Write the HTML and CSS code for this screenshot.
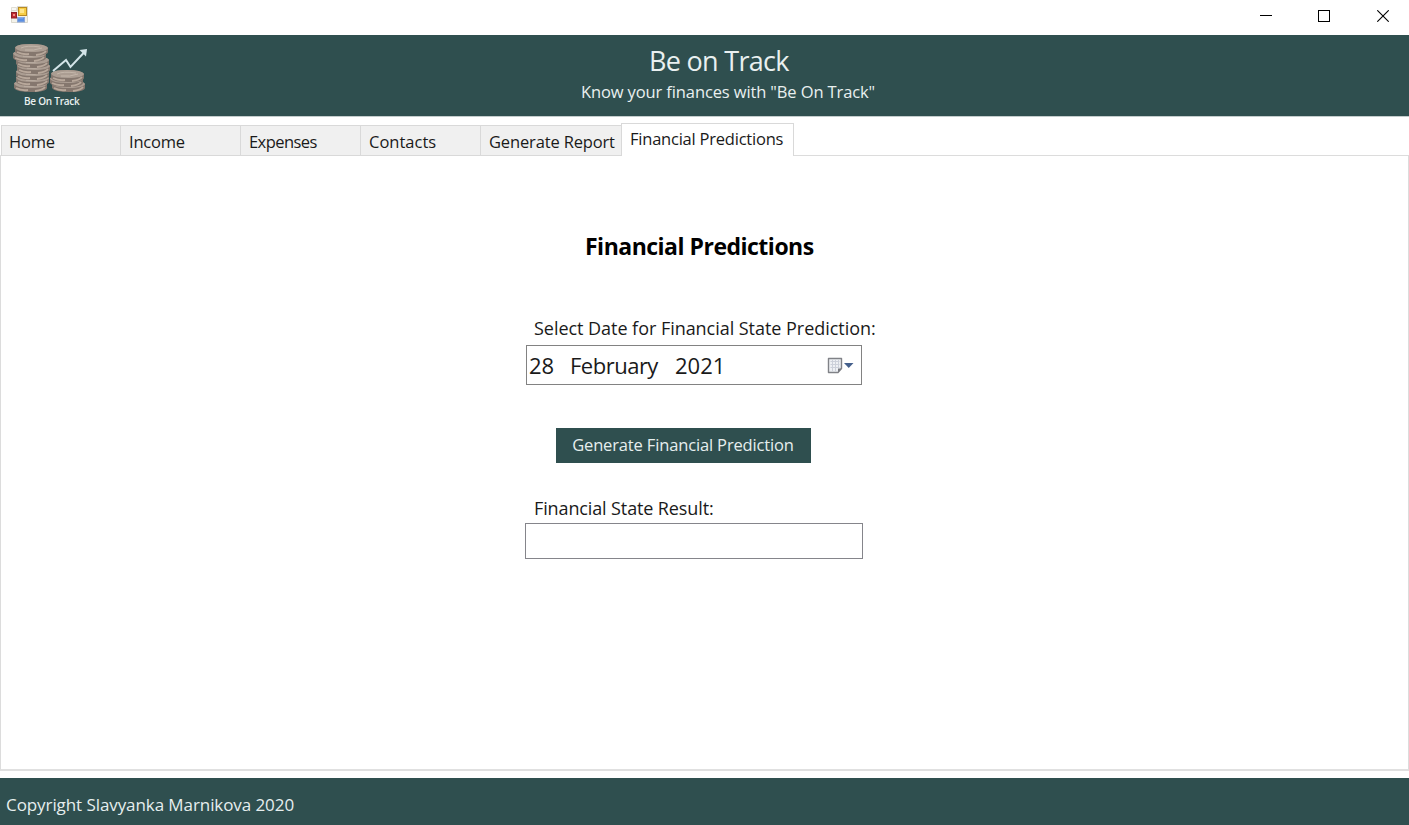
FILE: index.html
```html
<!DOCTYPE html>
<html lang="en">
<head>
<meta charset="utf-8">
<title>Be on Track</title>
<link rel="stylesheet" href="styles.css">
</head>
<body>
<div class="window">
  <div class="titlebar">
    <svg class="app-icon" width="19" height="19" viewBox="0 0 19 19">
      <path d="M7.5 .5h10v16h-16v-12h6z" fill="#f3f2ea" stroke="#d2cfc3" stroke-width=".8"/>
      <path d="M1.500 1.500h5v3h-5z" fill="#f8f8f4" stroke="#d8d6cc" stroke-width=".8"/>
      <rect x="8.500" y="1.500" width="8" height="8" fill="#f7ce45" stroke="#b98a22"/>
      <rect x="10" y="3" width="4" height="4" fill="#ffe68a"/>
      <rect x="1.500" y="6.500" width="5" height="5.500" fill="#bf2a2e" stroke="#8d2027"/>
      <rect x="3" y="8" width="2" height="2" fill="#ef8b84"/>
      <rect x="7.500" y="11.500" width="7" height="4.500" fill="#5a8fe2" stroke="#8ba6d8"/>
      <path d="M8 12h5" stroke="#86b0f2"/>
    </svg>
    <div class="controls">
      <svg width="12" height="12" viewBox="0 0 12 12"><path d="M0 5.5h12" stroke="#000"/></svg>
      <svg width="12" height="12" viewBox="0 0 12 12"><rect x=".5" y=".5" width="11" height="11" fill="none" stroke="#000"/></svg>
      <svg width="12" height="12" viewBox="0 0 12 12"><path d="M.3 .3l11.4 11.4M11.7 .3L.3 11.7" stroke="#000" stroke-width="1.1"/></svg>
    </div>
  </div>

  <header class="header">
    <div class="logo">
      <svg width="80" height="52" viewBox="0 0 80 52">
        <defs>
          <g id="coin">
            <path d="M0 4Q1 0 16 0T33 4V8Q32 12 17 12T0 8z" fill="#85776e"/>
            <path d="M0 3.800Q1 0 16 0T33 3.800Q32 8 17 8T0 3.800z" fill="#ab9d92"/>
            <path d="M6 4Q12 1 25 3M10 6Q19 7 27 4" fill="none" stroke="#c4b7ab" stroke-width="1"/>
            <path d="M2 8Q8 11 14 10M21 11Q29 10 31 7" fill="none" stroke="#b8a89b" stroke-width="1.800"/>
          </g>
        </defs>
        <g class="coins">
          <use href="#coin" x="4" y="38"/>
          <use href="#coin" x="6" y="32"/>
          <use href="#coin" x="6" y="26"/>
          <use href="#coin" x="7" y="20"/>
          <use href="#coin" x="6" y="14"/>
          <use href="#coin" x="3" y="8"/>
          <use href="#coin" x="5" y="2"/>
          <use href="#coin" x="42" y="38"/>
          <use href="#coin" x="40" y="33"/>
          <use href="#coin" x="41" y="28"/>
        </g>
        <path d="M43 29L56 18L60.500 25L74 10.500" fill="none" stroke="#d3e4e8" stroke-width="2"/>
        <path d="M69.500 8L77 7L76 14.500z" fill="#d3e4e8"/>
      </svg>
      <div class="logo-name">Be On Track</div>
    </div>
    <div class="heading">
      <div class="brand">Be on Track</div>
      <div class="tagline">Know your finances with "Be On Track"</div>
    </div>
  </header>

  <nav class="tabs">
    <div class="tab home">Home</div>
    <div class="tab income">Income</div>
    <div class="tab expenses">Expenses</div>
    <div class="tab contacts">Contacts</div>
    <div class="tab report">Generate Report</div>
    <div class="tab active">Financial Predictions</div>
  </nav>

  <main class="panel">
    <h1 class="title">Financial Predictions</h1>
    <div class="label date-label">Select Date for Financial State Prediction:</div>
    <div class="date">
      <span class="day">28</span><span class="month">February</span><span class="year">2021</span>
      <svg class="calendar" width="27" height="17" viewBox="0 0 27 17">
        <path d="M1.500 1.500h13v10l-3.500 4h-9.500z" fill="#eef0f4" stroke="#808287" stroke-width="1.400" stroke-linejoin="round"/>
        <path d="M3.500 4.500h9M3.500 7.500h9M3.500 10.500h9M5.500 3v11M8.500 3v11M11.500 3v8" stroke="#ccd0da" stroke-width="1"/>
        <path d="M11 15.500v-4h3.500z" fill="#777a80"/>
        <path d="M17 6h9.500l-4.750 5z" fill="#45608c"/>
      </svg>
    </div>
    <button class="generate">Generate Financial Prediction</button>
    <div class="label result-label">Financial State Result:</div>
    <input class="result" type="text">
  </main>

  <footer class="footer">Copyright Slavyanka Marnikova 2020</footer>
</div>
</body>
</html>
```

FILE: styles.css
```css
* { box-sizing: border-box; }
body {
  margin: 0;
  font-family: "Open Sans", sans-serif;
  color: #1a1a1a;
  background: #fff;
}
.window { display: flex; flex-direction: column; height: 825px; overflow: hidden; }

.titlebar { display: flex; justify-content: space-between; height: 35px; padding: 6px 20px 0 10px; }
.controls { display: flex; gap: 46px; padding-top: 4px; }
.controls svg { display: block; }
.controls svg:last-child { margin-left: 1px; }

.header {
  display: flex;
  height: 82px;
  background: #2f4f4f;
  border-bottom: 1px solid #c3cccc;
  color: #e9f0f0;
}
.logo { width: 100px; padding: 7px 0 0 10px; }
.logo svg { display: block; }
.coins { filter: blur(0.5px); }
.logo-name {
  padding-left: 14px;
  font-size: 10px;
  line-height: 14px;
  font-weight: 600;
  letter-spacing: -0.25px;
  white-space: nowrap;
}
.heading { padding: 7px 0 0 481px; white-space: nowrap; }
.brand { padding-left: 68px; font-size: 27px; line-height: 37px; letter-spacing: -0.7px; }
.tagline { font-size: 16.5px; line-height: 25px; letter-spacing: -0.12px; }

.tabs {
  display: flex;
  align-items: flex-end;
  height: 39px;
  padding-left: 1px;
  font-size: 16.5px;
  white-space: nowrap;
  position: relative;
  z-index: 1;
}
.tab {
  width: 120px;
  height: 31px;
  padding-left: 8px;
  line-height: 31px;
  background: #f0f0f0;
  border: solid #d9d9d9;
  border-width: 1px 0 1px 1px;
  letter-spacing: -0.2px;
}
.home { width: 119px; padding-left: 7px; }
.expenses { letter-spacing: -0.55px; }
.contacts { letter-spacing: 0; }
.report { width: 141px; letter-spacing: -0.15px; }
.active {
  width: 173px;
  height: 33px;
  line-height: 30px;
  background: #fff;
  border-width: 1px 1px 0;
  letter-spacing: -0.22px;
}

.panel {
  display: flex;
  flex-direction: column;
  align-items: flex-start;
  height: 616px;
  margin-top: -1px;
  padding: 75px 0 0 524px;
  border: 1px solid #dcdcdc;
  border-bottom: 2px solid #e0e0e0;
}
.title { margin: 0 0 0 60px; font-size: 23px; line-height: 30px; font-weight: 700; letter-spacing: -0.5px; color: #000; }
.label { margin-left: 9px; font-size: 18px; line-height: 24px; white-space: nowrap; letter-spacing: -0.04px; }
.date-label { margin-top: 55px; }
.date {
  display: flex;
  align-items: center;
  width: 336px;
  height: 40px;
  margin: 5px 0 0 1px;
  padding-left: 2px;
  border: 1px solid #828282;
  font-size: 22px;
  line-height: 38px;
}
.day { width: 41px; }
.month { width: 105px; letter-spacing: -0.5px; }
.year { letter-spacing: 0; }
.calendar { margin-left: auto; margin-right: 7px; }
.generate {
  width: 255px;
  height: 35px;
  margin: 43px 0 0 31px;
  padding: 0 1px 2px 0;
  border: 0;
  background: #2f4f4f;
  color: #e6eeee;
  font: 16.5px "Open Sans", sans-serif;
  letter-spacing: -0.15px;
}
.result-label { margin-top: 33px; letter-spacing: -0.12px; }
.result { width: 338px; height: 36px; margin-top: 3px; padding: 0 4px; border: 1px solid #85858b; font: 18px "Open Sans", sans-serif; }

.footer {
  height: 47px;
  margin-top: 7px;
  padding-left: 6px;
  background: #2f4f4f;
  color: #e6eeee;
  font-size: 17px;
  line-height: 53px;
  letter-spacing: -0.08px;
}
```
